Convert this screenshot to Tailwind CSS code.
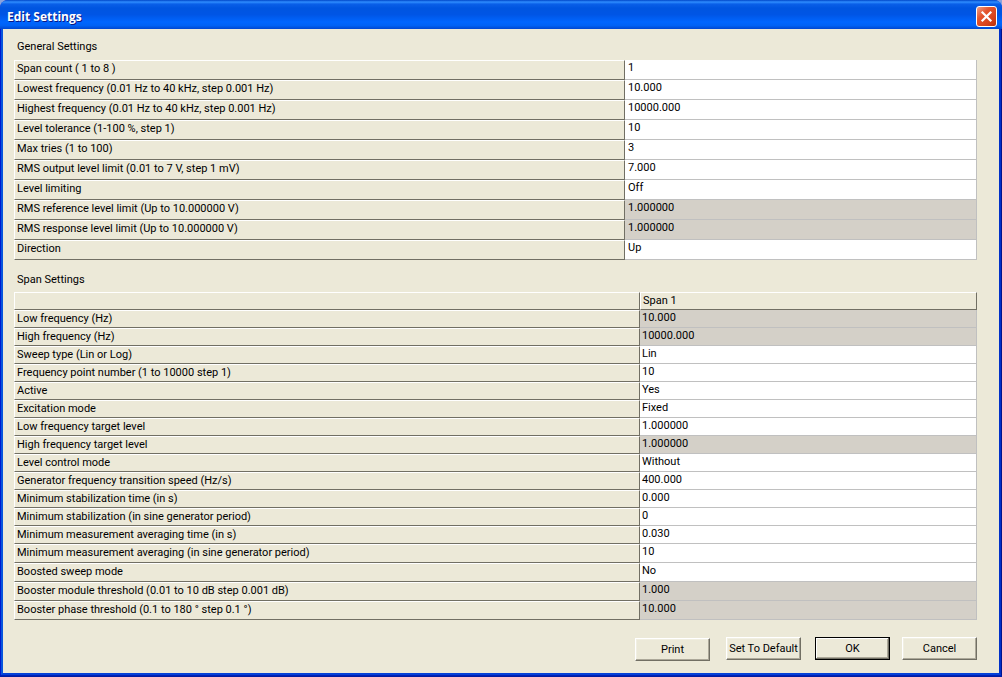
<!DOCTYPE html>
<html lang="en">
<head>
<meta charset="utf-8">
<title>Edit Settings</title>
<script src="https://cdn.jsdelivr.net/npm/@tailwindcss/browser@4"></script>
</head>
<body class="bg-[#8ba3dc]">
<div role="dialog" aria-labelledby="title" class="flex min-h-screen flex-col overflow-hidden rounded-t-lg bg-[#0831d9] font-[Roboto,sans-serif] text-[11px] leading-4 text-black">
  <header class="flex h-[29px] items-center justify-between bg-linear-[180deg,#0046c8_0%,#2f8dff_7%,#0a5fe8_14%,#0055e0_28%,#0055e5_50%,#0066ff_76%,#0062f5_88%,#0047d0_100%] pt-1 pr-[5px] pl-[7px]">
    <h1 id="title" class="font-['Open_Sans',sans-serif] text-[12px] font-bold text-white text-shadow-[1px_1px_0_#0a1883]">Edit Settings</h1>
    <button type="button" aria-label="Close" class="size-[21px] rounded-[3px] border border-white bg-linear-[135deg,#f0a088_0%,#e4552d_35%,#d9431c_70%,#b8320c_100%]">
      <svg viewBox="0 0 19 19" class="block size-[19px]" fill="none" stroke="#fff" stroke-width="2.2" stroke-linecap="square" aria-hidden="true"><path d="M5.5 5.5l8 8M13.5 5.5l-8 8"/></svg>
    </button>
  </header>

  <div class="flex grow bg-[#001ea0] pb-px">
  <div class="flex grow border-x-1 border-b-1 border-l-[#0019cf] border-r-[#00138c] border-b-[#0020b8]">
  <main class="grow border-x-2 border-b-2 border-[#0855dd] border-r-[#0030c8] border-b-[#0441d8] bg-[#ece9d8] pt-[10px] pr-[22px] pb-3 pl-[11px]">
    <h2 id="general" class="pl-[3px]">General Settings</h2>
    <table aria-labelledby="general" class="mt-[5px] w-full table-fixed border-separate border-spacing-0 text-left [&_td]:border-r [&_td]:border-b [&_td]:border-[#c0c0c0] [&_td]:bg-white [&_td]:pl-[3px] [&_td]:align-top [&_th]:border [&_th]:border-t-white [&_th]:border-r-[#716f64] [&_th]:border-b-[#716f64] [&_th]:border-l-white [&_th]:pl-0.5 [&_th]:align-top [&_th]:font-normal [&_tr]:h-5 [&_.off]:bg-[#d4d0c8]">
      <colgroup><col class="w-[611px]"><col></colgroup>
      <tbody>
        <tr><th scope="row">Span count ( 1 to 8 )</th><td>1</td></tr>
        <tr><th scope="row">Lowest frequency (0.01 Hz to 40 kHz, step 0.001 Hz)</th><td>10.000</td></tr>
        <tr><th scope="row">Highest frequency (0.01 Hz to 40 kHz, step 0.001 Hz)</th><td>10000.000</td></tr>
        <tr><th scope="row">Level tolerance (1-100 %, step 1)</th><td>10</td></tr>
        <tr><th scope="row">Max tries (1 to 100)</th><td>3</td></tr>
        <tr><th scope="row">RMS output level limit (0.01 to 7 V, step 1 mV)</th><td>7.000</td></tr>
        <tr><th scope="row">Level limiting</th><td>Off</td></tr>
        <tr><th scope="row">RMS reference level limit (Up to 10.000000 V)</th><td class="off">1.000000</td></tr>
        <tr><th scope="row">RMS response level limit (Up to 10.000000 V)</th><td class="off">1.000000</td></tr>
        <tr><th scope="row">Direction</th><td>Up</td></tr>
      </tbody>
    </table>

    <h2 id="span" class="mt-3 pl-[3px]">Span Settings</h2>
    <table aria-labelledby="span" class="mt-1 w-full table-fixed border-separate border-spacing-0 text-left [&_td]:border-r [&_td]:border-b [&_td]:border-[#c0c0c0] [&_td]:bg-white [&_td]:pl-0.5 [&_td]:align-top [&_th]:border [&_th]:border-t-white [&_th]:border-r-[#716f64] [&_th]:border-b-[#716f64] [&_th]:border-l-white [&_th]:pl-0.5 [&_th]:align-top [&_th]:font-normal [&_.off]:bg-[#d4d0c8]">
      <colgroup><col class="w-[626px]"><col></colgroup>
      <thead>
        <tr class="h-[18px]"><th scope="col" aria-label="Setting"></th><th scope="col">Span 1</th></tr>
      </thead>
      <tbody class="[&_tr]:h-[18px]">
        <tr><th scope="row">Low frequency (Hz)</th><td class="off">10.000</td></tr>
        <tr><th scope="row">High frequency (Hz)</th><td class="off">10000.000</td></tr>
        <tr><th scope="row">Sweep type (Lin or Log)</th><td>Lin</td></tr>
        <tr><th scope="row">Frequency point number (1 to 10000 step 1)</th><td>10</td></tr>
        <tr><th scope="row">Active</th><td>Yes</td></tr>
        <tr><th scope="row">Excitation mode</th><td>Fixed</td></tr>
        <tr><th scope="row">Low frequency target level</th><td>1.000000</td></tr>
        <tr><th scope="row">High frequency target level</th><td class="off">1.000000</td></tr>
        <tr><th scope="row">Level control mode</th><td>Without</td></tr>
        <tr><th scope="row">Generator frequency transition speed (Hz/s)</th><td>400.000</td></tr>
        <tr><th scope="row">Minimum stabilization time (in s)</th><td>0.000</td></tr>
        <tr><th scope="row">Minimum stabilization (in sine generator period)</th><td>0</td></tr>
        <tr><th scope="row">Minimum measurement averaging time (in s)</th><td>0.030</td></tr>
      </tbody>
      <tbody class="[&_tr]:h-[19px]">
        <tr><th scope="row">Minimum measurement averaging (in sine generator period)</th><td>10</td></tr>
        <tr><th scope="row">Boosted sweep mode</th><td>No</td></tr>
        <tr><th scope="row">Booster module threshold (0.01 to 10 dB step 0.001 dB)</th><td class="off">1.000</td></tr>
        <tr><th scope="row">Booster phase threshold (0.1 to 180 ° step 0.1 °)</th><td class="off">10.000</td></tr>
      </tbody>
    </table>

    <div class="mt-[17px] flex justify-end [&_button]:h-[23px] [&_button]:w-[75px] [&_button]:whitespace-nowrap">
      <button type="button" class="mt-px mr-4 border border-white border-r-[#716f64] border-b-[#716f64] shadow-[inset_-1px_-1px_0_#aca899,inset_1px_1px_0_#f1efe2]">Print</button>
      <button type="button" class="mr-[14px] flex items-center justify-center border border-white border-r-[#716f64] border-b-[#716f64] shadow-[inset_-1px_-1px_0_#aca899,inset_1px_1px_0_#f1efe2]">Set To Default</button>
      <button type="button" class="mr-3 border border-black shadow-[inset_-1px_-1px_0_#716f64,inset_1px_1px_0_#fff,inset_-2px_-2px_0_#aca899]">OK</button>
      <button type="button" class="border border-white border-r-[#716f64] border-b-[#716f64] shadow-[inset_-1px_-1px_0_#aca899,inset_1px_1px_0_#f1efe2]">Cancel</button>
    </div>
  </main>
  </div>
  </div>
</div>
</body>
</html>
